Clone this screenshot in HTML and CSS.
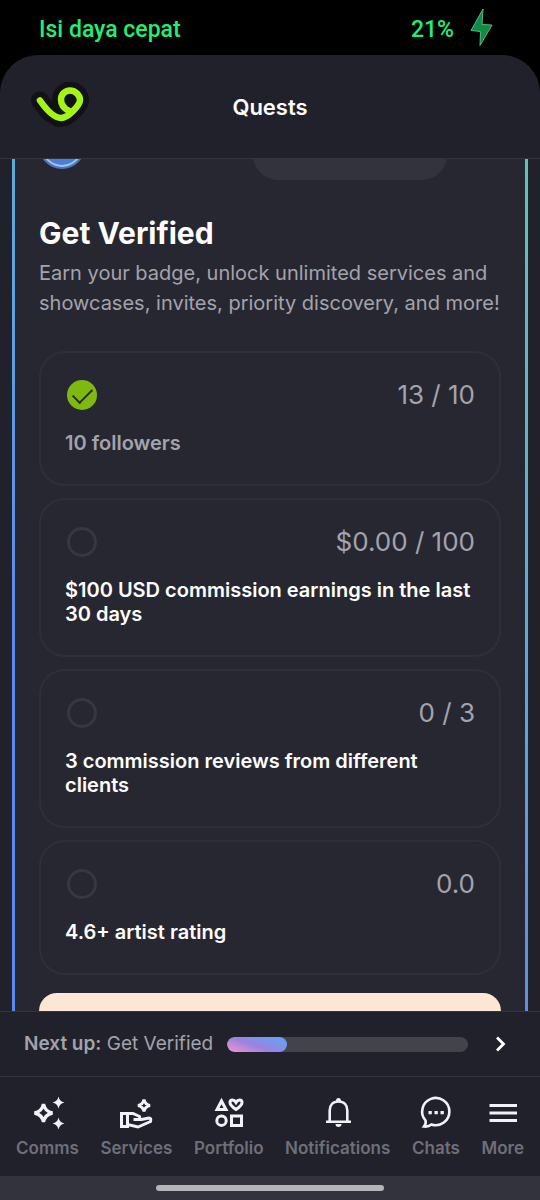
FILE: index.html
```html
<!DOCTYPE html>
<html lang="en">
<head>
<meta charset="utf-8">
<meta name="viewport" content="width=device-width, initial-scale=1">
<title>Quests</title>
<link rel="stylesheet" href="styles.css">
</head>
<body>
<div class="status">
  <span>Isi daya cepat</span>
  <span class="battery">21%
    <svg class="bolt" width="24" height="38" viewBox="0 0 24 38"><path d="M14 1 2 22.500l9.500 1L11 37.500 23 17l-10-.500z" fill="#0b8d43" stroke="#5bb57e" stroke-width="1" stroke-linejoin="round"/></svg>
  </span>
</div>
<div class="app">
  <header class="header">
    <a class="logo" href="#" aria-label="Home">
      <svg width="62" height="50" viewBox="29 81 62 50" fill="none" stroke-linecap="round" stroke-linejoin="round">
        <path d="M39 99.500C47 111 54 117 60 117C67 117 79 104 79 99C79 95 75 89.500 69 89.500C63.500 89.500 60 94 60 98.500C60 103 63 107.500 68 110" stroke="#111116" stroke-width="18"/>
        <path d="M39 99.500C47 111 54 117 60 117C67 117 79 104 79 99C79 95 75 89.500 69 89.500C63.500 89.500 60 94 60 98.500C60 103 63 107.500 68 110" stroke="#a4f516" stroke-width="6.500"/>
      </svg>
    </a>
    <h1 class="page-title">Quests</h1>
  </header>
  <main class="main">
    <section class="quest">
      <div class="quest-top"><span class="badge"></span><span class="pill"></span></div>
      <h2 class="quest-title">Get Verified</h2>
      <p class="quest-text">Earn your badge, unlock unlimited services and showcases, invites, priority discovery, and more!</p>
      <ul class="tasks">
        <li class="task done">
          <div class="task-row"><input class="tick" type="checkbox" id="t1" checked disabled><span class="count">13 / 10</span></div>
          <label class="task-label" for="t1">10 followers</label>
        </li>
        <li class="task">
          <div class="task-row"><input class="tick" type="checkbox" id="t2" disabled><span class="count">$0.00 / 100</span></div>
          <label class="task-label" for="t2">$100 USD commission earnings in the last 30 days</label>
        </li>
        <li class="task">
          <div class="task-row"><input class="tick" type="checkbox" id="t3" disabled><span class="count">0 / 3</span></div>
          <label class="task-label" for="t3">3 commission reviews from different clients</label>
        </li>
        <li class="task">
          <div class="task-row"><input class="tick" type="checkbox" id="t4" disabled><span class="count">0.0</span></div>
          <label class="task-label" for="t4">4.6+ artist rating</label>
        </li>
      </ul>
      <div class="callout"></div>
    </section>
  </main>
  <div class="next">
    <label class="next-label" for="progress"><b>Next up:</b> Get Verified</label>
    <progress class="bar" id="progress" value="25" max="100"></progress>
    <button class="next-button" type="button" aria-label="Open quest">
      <svg width="12" height="18" viewBox="0 0 12 18" fill="none" stroke="#fff" stroke-width="2.800"><path d="M2 2.500 8.500 9 2 15.500"/></svg>
    </button>
  </div>
  <nav class="nav">
    <a class="nav-item" href="#">
      <svg class="icon" viewBox="0 0 34 34"><path d="M13.500 8Q15 15.500 22.500 17Q15 18.500 13.500 26Q12 18.500 4.500 17Q12 15.500 13.500 8Z" stroke-width="3.400"/><path class="solid" d="M28.500 .500Q29.500 5.500 34.500 6.500Q29.500 7.500 28.500 12.500Q27.500 7.500 22.500 6.500Q27.500 5.500 28.500 .500ZM28.500 21.500Q29.500 26.500 34.500 27.500Q29.500 28.500 28.500 33.500Q27.500 28.500 22.500 27.500Q27.500 26.500 28.500 21.500Z" stroke-width="1"/></svg>
      Comms
    </a>
    <a class="nav-item" href="#">
      <svg class="icon" viewBox="0 0 34 34"><path d="M25 3.500Q26 8.500 31 9.500Q26 10.500 25 15.500Q24 10.500 19 9.500Q24 8.500 25 3.500ZM2.500 17.500H8.500V30.500H2.500ZM8.500 17.500H14L20.500 20.500Q21.500 23.500 18.500 23.500H14.500M18.500 23.500H22.500L30 22Q32.500 22 31.500 25.500L19 31L8.500 28.500"/></svg>
      Services
    </a>
    <a class="nav-item" href="#">
      <svg class="icon" viewBox="0 0 34 34"><path d="M9.500 5 14 13.500H5ZM24 13.500Q18 9.500 18 6.500Q18 4 20.500 4Q22.500 4 24 6.500Q25.500 4 27.500 4Q30 4 30 6.500Q30 9.500 24 13.500ZM19.500 20H29.500V29.500H19.500Z"/><circle cx="9.500" cy="24.700" r="4.700"/></svg>
      Portfolio
    </a>
    <a class="nav-item" href="#">
      <svg class="icon" viewBox="0 0 34 34"><path d="M5 25.700H30M8.700 25V14.500C8.700 9 12 5.500 17.500 5.500S26.300 9 26.300 14.500V25" stroke-width="2.600"/><path class="solid" d="M15 5Q15 2 17.500 2T20 5ZM14.500 28H20.500Q20.500 31 17.500 31T14.500 28Z"/></svg>
      Notifications
    </a>
    <a class="nav-item" href="#">
      <svg class="icon" viewBox="0 0 34 34"><path d="M6.500 24.500A13.600 13.600 0 1 1 12.500 28.500Q9.500 31 5 30.500Q7.500 27.500 6.500 24.500Z" stroke-width="2.600"/><path class="solid" d="M9.500 15h3.300v3.300h-3.300zM15.500 15h3.300v3.300h-3.300zM21.500 15h3.300v3.300h-3.300z"/></svg>
      Chats
    </a>
    <a class="nav-item" href="#">
      <svg class="icon" viewBox="0 0 34 34"><path d="M3.500 9.500H31M3.500 17H31M3.500 24.500H31" stroke-width="3"/></svg>
      More
    </a>
  </nav>
  <div class="gesture"><span class="handle"></span></div>
</div>
</body>
</html>
```
FILE: styles.css
```css
* { box-sizing: border-box; }
body {
  margin: 0;
  height: 100vh;
  display: flex;
  flex-direction: column;
  background: #000;
  color: #fff;
  font-family: Inter, "Noto Sans", sans-serif;
}
h1, h2, p, ul { margin: 0; padding: 0; }
ul { list-style: none; }
svg { display: block; }
a { color: inherit; text-decoration: none; }

.status {
  flex: none;
  display: flex;
  justify-content: space-between;
  align-items: center;
  height: 55px;
  padding: 3px 47px 0 39px;
  color: #22ee75;
  font: 500 23px Roboto, sans-serif;
}
.battery { display: flex; align-items: center; gap: 15px; }
.bolt { margin-bottom: 4px; }

.app {
  flex: 1;
  min-height: 0;
  display: flex;
  flex-direction: column;
  overflow: hidden;
  border-radius: 38px 38px 0 0;
  background: #21212b;
}
.header {
  flex: none;
  display: grid;
  grid-template-columns: 62px 1fr 62px;
  align-items: center;
  height: 104px;
  padding: 0 30px;
  border-bottom: 1px solid #34343d;
}
.page-title { font-size: 22px; font-weight: 600; line-height: 30px; text-align: center; }

.main { flex: 1; min-height: 0; overflow: hidden; padding: 0 12px; }
.quest {
  padding: 0 24px;
  border: solid transparent;
  border-width: 0 3px;
  background:
    linear-gradient(#272732, #272732) padding-box,
    linear-gradient(220deg, #5cc6b4 0%, #5fa3df 42%, #5f88ea 68%, #5f88ea 100%) border-box;
}
.quest-top {
  display: flex;
  justify-content: space-between;
  align-items: flex-end;
  height: 21px;
  margin-right: 54px;
  overflow: hidden;
}
.badge {
  flex: none;
  width: 46px;
  height: 46px;
  margin-bottom: 11px;
  border: 2px solid #5475b8;
  border-radius: 50%;
  background: #4c7ed4;
  box-shadow: inset 0 0 0 2px #9cc8f5;
}
.pill { flex: none; width: 194px; height: 50px; border-radius: 25px; background: #33333e; }
.quest-title { margin-top: 33px; font-size: 30px; font-weight: 700; line-height: 40px; }
.quest-text { margin-top: 5px; color: #a3a3ac; font-size: 20px; line-height: 30px; }

.tasks { display: grid; gap: 12px; margin-top: 33px; }
.task { padding: 24px 24px 29px; border: 2px solid #2f2f39; border-radius: 26px; }
.task-row { display: flex; justify-content: space-between; align-items: center; height: 36px; }
.tick {
  appearance: none;
  display: grid;
  place-items: start center;
  width: 30px;
  height: 30px;
  margin: 0 0 0 2px;
  border: 3px solid #373741;
  border-radius: 50%;
}
.tick:checked { border: 0; background: #7db90f; }
.tick:checked::after {
  content: "";
  width: 9px;
  height: 17px;
  margin-top: 4px;
  border: solid #20301a;
  border-width: 0 2px 2px 0;
  transform: rotate(45deg);
}
.count { color: #a3a3ac; font-size: 26px; line-height: 36px; }
.task-label { display: block; margin-top: 18px; font-size: 20px; font-weight: 600; line-height: 24px; }
.done .task-label { color: #a3a3ac; }
.callout { height: 64px; margin-top: 18px; border-radius: 18px; background: #fce6d4; }

.next {
  flex: none;
  display: flex;
  align-items: center;
  height: 65px;
  padding: 0 24px;
  border-top: 1px solid #34343d;
}
.next-label { color: #a3a3ac; font-size: 19px; line-height: 24px; white-space: nowrap; }
.next-label b { font-weight: 600; }
.bar {
  appearance: none;
  flex: 1;
  min-width: 0;
  height: 15px;
  margin: 0 18px 0 14px;
  border: 0;
  border-radius: 8px;
  overflow: hidden;
  background: #43434c;
}
.bar::-webkit-progress-bar { background: #43434c; }
.bar::-webkit-progress-value { border-radius: 8px; background: linear-gradient(20deg, #f296ce, #9b82e0 45%, #6e9cf0 80%); }
.next-button { display: grid; place-items: center; width: 30px; height: 40px; padding: 0; border: 0; background: none; }

.nav {
  flex: none;
  display: flex;
  justify-content: space-between;
  height: 100px;
  padding: 19px 16px 0;
  border-top: 1px solid #34343d;
}
.nav-item { display: grid; justify-items: center; align-content: start; gap: 6px; color: #6f6f79; font-size: 17px; font-weight: 600; line-height: 24px; }
.icon { width: 34px; height: 34px; overflow: visible; fill: none; stroke: #f2f1f7; stroke-width: 3; }
.icon .solid { fill: #f2f1f7; stroke: none; }
.gesture { flex: none; display: grid; place-items: center; height: 24px; background: #33333d; }
.handle { width: 228px; height: 6px; border-radius: 3px; background: #b5b5b8; }
```
